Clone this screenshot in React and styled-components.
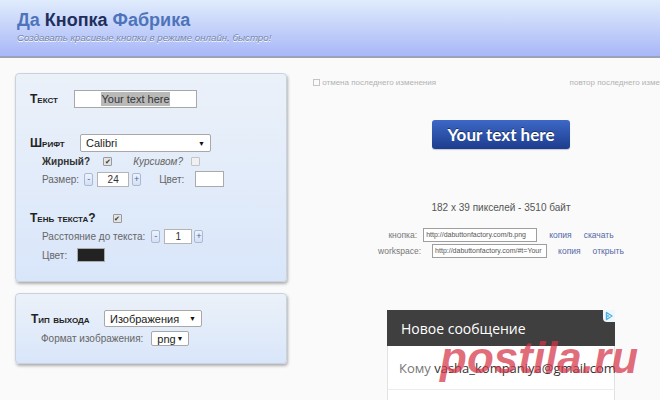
import React from 'react'
import styled, { createGlobalStyle } from 'styled-components'

const GlobalStyle = createGlobalStyle`
  html, body {
    margin: 0;
    padding: 0;
  }
  body {
    background: #fafafa;
    font-family: 'Liberation Sans', Arial, sans-serif;
    overflow: hidden;
  }
`

function Check({ checked, ml }) {
  return <CheckBox $checked={checked} $ml={ml}>{checked ? '✔' : ''}</CheckBox>
}

function Select({ value, w, h, ml }) {
  return (
    <SelectBox $w={w} $h={h} $ml={ml}>
      <span>{value}</span>
      <Arrow>▼</Arrow>
    </SelectBox>
  )
}

function Stepper({ value, w, gapL, gapR, ml }) {
  return (
    <>
      <StepBtn $ml={ml}>-</StepBtn>
      <NumBox $w={w} $ml={gapL}>{value}</NumBox>
      <StepBtn $ml={gapR}>+</StepBtn>
    </>
  )
}

function AdChoices() {
  return (
    <AdIcon>
      <svg width='10' height='10' viewBox='0 0 10 10'>
        <path d='M2.5 1.5 L8 5 L2.5 8.5 Z' fill='none' stroke='#4fb0e0' strokeWidth='1.4' strokeLinejoin='round' />
        <circle cx='4' cy='5' r='0.9' fill='#4fb0e0' />
      </svg>
    </AdIcon>
  )
}

export default function App() {
  return (
    <Page>
      <GlobalStyle />
      <Header>
        <Title>
          Да <span>Кнопка</span> Фабрика
        </Title>
        <Tagline>Создавать красивые кнопки в режиме онлайн, быстро!</Tagline>
      </Header>

      <Main>
        <LeftCol>
          <Panel $pad='16px 14px 19px'>
            <Row $h={18}>
              <Heading $w={44}>Текст</Heading>
              <TextField>
                <Selected>Your text here</Selected>
              </TextField>
            </Row>
            <Row $h={18} $mt={26}>
              <Heading $w={50}>Шрифт</Heading>
              <Select value='Calibri' w={131} h={18} />
            </Row>
            <Row $h={12} $mt={3} $indent={12}>
              <Caption $bold>Жирный?</Caption>
              <Check checked ml={13} />
              <Caption $italic $ml={21}>Курсивом?</Caption>
              <Check ml={8} />
            </Row>
            <Row $h={16} $mt={4} $indent={12}>
              <Caption>Размер:</Caption>
              <Stepper value='24' w={32} ml={5} gapL={4} gapR={3} />
              <Caption $ml={18}>Цвет:</Caption>
              <Swatch $ml={11} $w={29} $h={16} $color='#ffffff' />
            </Row>
            <Row $h={14} $mt={24}>
              <Heading>Тень текста?</Heading>
              <Check checked ml={17} />
            </Row>
            <Row $h={14} $mt={4} $indent={12}>
              <Caption>Расстояние до текста:</Caption>
              <Stepper value='1' w={28} ml={6} gapL={4} gapR={2} />
            </Row>
            <Row $h={14} $mt={5} $indent={12}>
              <Caption>Цвет:</Caption>
              <Swatch $ml={10} $w={28} $h={14} $color='#222222' />
            </Row>
          </Panel>

          <Panel $pad='16px 14px 17px 15px'>
            <Row $h={17}>
              <Heading $w={73}>Тип выхода</Heading>
              <Select value='Изображения' w={98} h={17} />
            </Row>
            <Row $h={15} $mt={4} $indent={10}>
              <Caption>Формат изображения:</Caption>
              <Select value='png' w={38} h={15} ml={8} />
            </Row>
          </Panel>
        </LeftCol>

        <RightCol>
          <UndoBar>
            <span>
              <UndoMark /> отмена последнего изменения
            </span>
            <span>повтор последнего изменения</span>
          </UndoBar>

          <DemoButton>Your text here</DemoButton>

          <SizeInfo>182 x 39 пикселей - 3510 байт</SizeInfo>

          <LinkRow $mt={13}>
            <LinkLabel>кнопка:</LinkLabel>
            <UrlBox $w={114} $ml={6}>http://dabuttonfactory.com/b.png</UrlBox>
            <LinkText $ml={12}>копия</LinkText>
            <LinkText $ml={12}>скачать</LinkText>
          </LinkRow>
          <LinkRow $mt={1}>
            <LinkLabel>workspace:</LinkLabel>
            <UrlBox $w={115} $ml={11}>http://dabuttonfactory.com/#t=Your</UrlBox>
            <LinkText $ml={11}>копия</LinkText>
            <LinkText $ml={12}>открыть</LinkText>
          </LinkRow>

          <Ad>
            <AdHead>Новое сообщение</AdHead>
            <AdChoices />
            <AdField>
              <AdTo>Кому</AdTo>&nbsp;vasha_kompaniya@gmail.com
              <Caret />
            </AdField>
            <AdFill />
          </Ad>
        </RightCol>
      </Main>

      <Watermark>postila.ru</Watermark>
    </Page>
  )
}

const Page = styled.div`
  position: relative;
  height: 400px;
  width: 660px;
  overflow: hidden;
  background: #fafafa;
`
const Header = styled.header`
  box-sizing: border-box;
  height: 58px;
  padding: 11px 0 0 17px;
  background: linear-gradient(#e0ecfc, #a8b7f8);
  border-bottom: 2px solid #9aa2b4;
`
const Title = styled.h1`
  margin: 0;
  font-size: 18px;
  line-height: 18px;
  font-weight: bold;
  color: #4d74ba;
  span {
    color: #1f2f5c;
  }
`
const Tagline = styled.p`
  margin: 3px 0 0;
  font-size: 9.7px;
  line-height: 12px;
  font-style: italic;
  color: #7484a8;
  text-shadow: 0 1px 0 #fff;
`
const Main = styled.main`
  display: flex;
  gap: 14px;
  width: 720px;
  padding: 15px 0 0 15px;
`
const LeftCol = styled.div`
  display: flex;
  flex-direction: column;
  gap: 11px;
  width: 272px;
  flex-shrink: 0;
`
const Panel = styled.section`
  border: 1px solid #c9d3df;
  border-radius: 4px;
  background: linear-gradient(#ebf1f9, #d9e6fa);
  box-shadow: 1px 2px 3px rgba(0, 0, 0, 0.3);
  padding: ${(p) => p.$pad};
`
const Row = styled.div`
  display: flex;
  align-items: center;
  height: ${(p) => p.$h}px;
  margin-top: ${(p) => p.$mt || 0}px;
  padding-left: ${(p) => p.$indent || 0}px;
`
const Heading = styled.span`
  flex-shrink: 0;
  width: ${(p) => (p.$w ? `${p.$w}px` : 'auto')};
  font-size: 12px;
  font-weight: bold;
  font-variant: small-caps;
  color: #222;
`
const Caption = styled.span`
  margin-left: ${(p) => p.$ml || 0}px;
  font-size: 10px;
  color: ${(p) => (p.$bold ? '#333' : '#666')};
  font-weight: ${(p) => (p.$bold ? 'bold' : 'normal')};
  font-style: ${(p) => (p.$italic ? 'italic' : 'normal')};
`
const TextField = styled.div`
  box-sizing: border-box;
  width: 123px;
  height: 18px;
  display: flex;
  align-items: center;
  justify-content: center;
  background: #fff;
  border: 1px solid #a8a8a8;
  font-size: 11px;
  color: #333;
`
const Selected = styled.span`
  background: #b9b9b9;
  padding: 1px 0;
`
const SelectBox = styled.div`
  box-sizing: border-box;
  width: ${(p) => p.$w}px;
  height: ${(p) => p.$h}px;
  margin-left: ${(p) => p.$ml || 0}px;
  display: flex;
  align-items: center;
  justify-content: space-between;
  padding: 0 5px;
  background: #fff;
  border: 1px solid #a8a8a8;
  border-radius: 2px;
  font-size: 11px;
  color: #222;
`
const Arrow = styled.span`
  font-size: 7px;
  color: #111;
`
const CheckBox = styled.span`
  box-sizing: border-box;
  width: 9px;
  height: 9px;
  margin-left: ${(p) => p.$ml || 0}px;
  display: flex;
  align-items: center;
  justify-content: center;
  border: 1px solid ${(p) => (p.$checked ? '#9a9a9a' : '#c4c4c4')};
  border-radius: 1px;
  background: ${(p) => (p.$checked ? '#e4e4e4' : '#eef0f2')};
  font-size: 7px;
  line-height: 1;
  color: #333;
`
const StepBtn = styled.span`
  box-sizing: border-box;
  width: 9px;
  height: 13px;
  margin-left: ${(p) => p.$ml || 0}px;
  display: flex;
  align-items: center;
  justify-content: center;
  border: 1px solid #a9b9d6;
  border-radius: 2px;
  background: linear-gradient(#eef3fb, #d4e0f3);
  font-size: 9px;
  color: #4465a8;
`
const NumBox = styled.span`
  box-sizing: border-box;
  width: ${(p) => p.$w}px;
  height: 15px;
  margin-left: ${(p) => p.$ml || 0}px;
  display: flex;
  align-items: center;
  justify-content: center;
  background: #fff;
  border: 1px solid #b4b4b4;
  font-size: 10px;
  color: #333;
`
const Swatch = styled.span`
  box-sizing: border-box;
  width: ${(p) => p.$w}px;
  height: ${(p) => p.$h}px;
  margin-left: ${(p) => p.$ml || 0}px;
  background: ${(p) => p.$color};
  border: 1px solid #aaa;
`
const RightCol = styled.div`
  width: 400px;
  display: flex;
  flex-direction: column;
  align-items: center;
`
const UndoBar = styled.div`
  align-self: stretch;
  display: flex;
  justify-content: space-between;
  margin-top: 5px;
  padding: 0 19px 0 12px;
  font-size: 8px;
  line-height: 10px;
  color: #b2b2b2;
`
const UndoMark = styled.span`
  display: inline-block;
  width: 5px;
  height: 5px;
  border: 1px solid #c4c4c4;
  vertical-align: middle;
`
const DemoButton = styled.div`
  width: 138px;
  height: 29px;
  margin-top: 32px;
  display: flex;
  align-items: center;
  justify-content: center;
  border-radius: 3px;
  background: linear-gradient(#3d68c6, #1d3d8e);
  box-shadow: 0 1px 1px rgba(0, 0, 0, 0.2);
  font-family: Lato, 'Open Sans', sans-serif;
  font-weight: bold;
  font-size: 17px;
  color: #fff;
  text-shadow: 0 -1px 0 rgba(0, 0, 0, 0.45);
`
const SizeInfo = styled.div`
  margin-top: 53px;
  font-size: 10px;
  line-height: 12px;
  color: #555;
`
const LinkRow = styled.div`
  display: flex;
  align-items: center;
  height: 15px;
  margin-top: ${(p) => p.$mt}px;
  font-size: 8.5px;
`
const LinkLabel = styled.span`
  color: #777;
`
const UrlBox = styled.span`
  box-sizing: border-box;
  width: ${(p) => p.$w}px;
  height: 14px;
  margin-left: ${(p) => p.$ml}px;
  padding: 0 2px;
  display: flex;
  align-items: center;
  overflow: hidden;
  white-space: nowrap;
  background: #fff;
  border: 1px solid #9e9e9e;
  font-size: 7px;
  color: #555;
`
const LinkText = styled.span`
  margin-left: ${(p) => p.$ml}px;
  color: #5468a6;
`
const Ad = styled.div`
  position: relative;
  width: 228px;
  margin-top: 52px;
  font-family: 'Open Sans', sans-serif;
`
const AdHead = styled.div`
  height: 36px;
  display: flex;
  align-items: center;
  padding-left: 14px;
  background: #3f3f3f;
  font-size: 14px;
  color: #fff;
`
const AdIcon = styled.span`
  position: absolute;
  top: 0;
  right: 0;
  width: 12px;
  height: 12px;
  display: flex;
  align-items: center;
  justify-content: center;
  background: #eef7fc;
  border-bottom-left-radius: 4px;
`
const AdField = styled.div`
  box-sizing: border-box;
  height: 44px;
  display: flex;
  align-items: center;
  padding-left: 11px;
  background: #fff;
  border: 1px solid #e2e2e2;
  border-top: none;
  border-bottom-color: #ececec;
  font-size: 13px;
  color: #333;
  white-space: nowrap;
`
const AdTo = styled.span`
  color: #777;
`
const Caret = styled.span`
  width: 1px;
  height: 18px;
  margin-left: 1px;
  background: #111;
`
const AdFill = styled.div`
  height: 30px;
  background: #fff;
  border: 1px solid #e2e2e2;
  border-top: none;
`
const Watermark = styled.div`
  position: absolute;
  left: 440px;
  top: 336px;
  font-size: 44px;
  line-height: 44px;
  font-weight: bold;
  font-style: italic;
  color: rgba(214, 52, 72, 0.72);
  pointer-events: none;
`
